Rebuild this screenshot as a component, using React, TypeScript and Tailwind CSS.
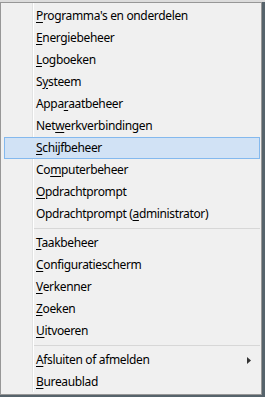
type Item = { label: string; key: number; arrow?: boolean; active?: boolean };

const groups: Item[][] = [
  [
    { label: "Programma's en onderdelen", key: 0 },
    { label: 'Energiebeheer', key: 0 },
    { label: 'Logboeken', key: 0 },
    { label: 'Systeem', key: 1 },
    { label: 'Apparaatbeheer', key: 4 },
    { label: 'Netwerkverbindingen', key: 3 },
    { label: 'Schijfbeheer', key: 0, active: true },
    { label: 'Computerbeheer', key: 2 },
    { label: 'Opdrachtprompt', key: 0 },
    { label: 'Opdrachtprompt (administrator)', key: 16 },
  ],
  [
    { label: 'Taakbeheer', key: 0 },
    { label: 'Configuratiescherm', key: 0 },
    { label: 'Verkenner', key: 0 },
    { label: 'Zoeken', key: 0 },
    { label: 'Uitvoeren', key: 0 },
  ],
  [
    { label: 'Afsluiten of afmelden', key: 0, arrow: true },
    { label: 'Bureaublad', key: 0 },
  ],
];

const MenuItem = ({ item }: { item: Item }) => {
  const { label, key } = item;
  return (
    <div
      className={`relative h-[22px] flex items-center pl-[32px] border ${
        item.active ? 'bg-[#d1e2f5] border-[#84b9ee]' : 'border-transparent'
      }`}
    >
      <span className="-ml-px">
        {label.slice(0, key)}
        <span className="underline underline-offset-2 decoration-1">{label[key]}</span>
        {label.slice(key + 1)}
      </span>
      {item.arrow && (
        <svg className="absolute right-[8px] top-[7px]" width="4" height="7" viewBox="0 0 4 7">
          <path d="M0 0 L4 3.5 L0 7 Z" fill="#333" />
        </svg>
      )}
    </div>
  );
};

const Separator = () => (
  <div className="h-[7px] pt-[3px] ml-[28px]">
    <div className="h-px bg-[#d7d7d7]" />
  </div>
);

export default function App() {
  return (
    <div className="w-[265px] h-[397px] bg-[#56636b] overflow-hidden">
      <div className="h-[2px] bg-[#dcdcdc]" />
      <div
        className="relative w-[262px] h-[393px] bg-[#f0f0f0] border border-[#979797] pt-[2px] pl-[3px] pr-px text-[12px] tracking-[-0.35px] text-black"
        style={{ fontFamily: '"Noto Sans", "Open Sans", sans-serif' }}
      >
        <div className="absolute left-[31px] top-0 bottom-[2px] w-px bg-[#e2e3e3]" />
        <div className="absolute left-[32px] top-0 bottom-[2px] w-px bg-white" />
        {groups.map((g, gi) => (
          <div key={gi}>
            {gi > 0 && <Separator />}
            {g.map((item) => (
              <MenuItem key={item.label} item={item} />
            ))}
          </div>
        ))}
      </div>
    </div>
  );
}
